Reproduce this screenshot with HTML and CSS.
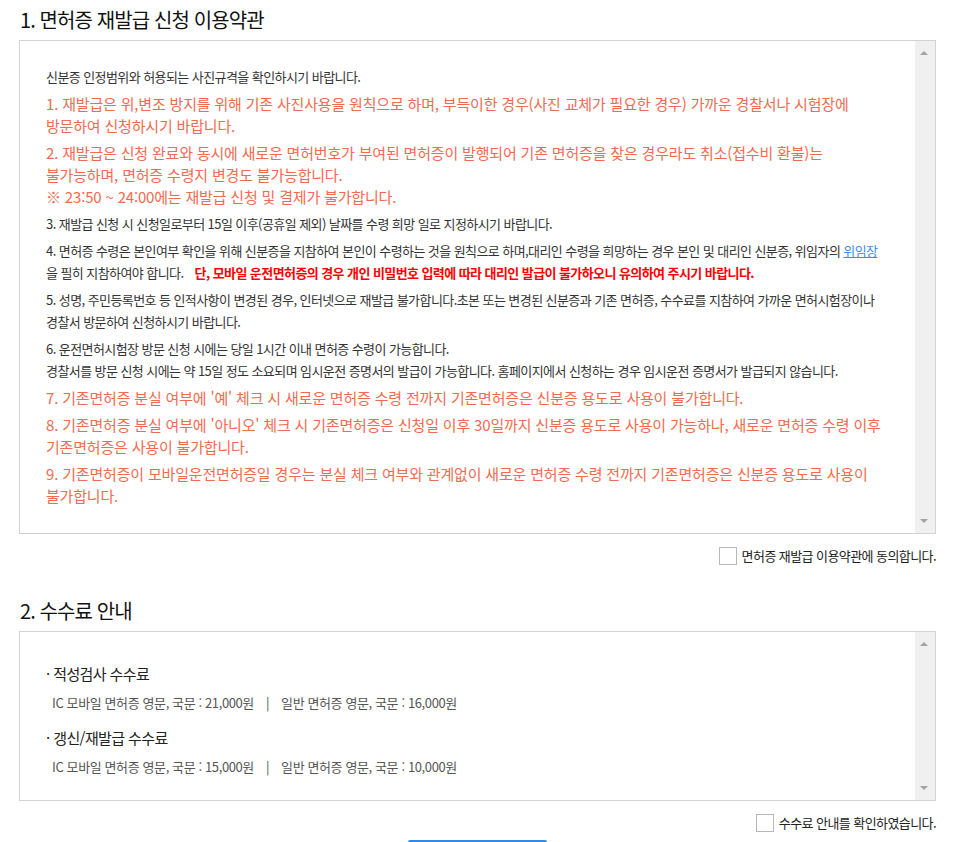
FILE: index.html
```html
<!DOCTYPE html>
<html lang="ko">
<head>
    <meta charset="UTF-8">
    <meta name="viewport" content="width=device-width, initial-scale=1.0">
    <title>면허증 재발급 신청</title>
    <link rel="stylesheet" href="styles.css">
</head>
<body>
    <div class="wrap">
        <h2 class="sec-title">1. 면허증 재발급 신청 이용약관</h2>
        <div class="scroll-box terms">
            <div class="scroll-body">
                <p class="txt">신분증 인정범위와 허용되는 사진규격을 확인하시기 바랍니다.</p>
                <p class="warn">1. 재발급은 위,변조 방지를 위해 기존 사진사용을 원칙으로 하며, 부득이한 경우(사진 교체가 필요한 경우) 가까운 경찰서나 시험장에<br>방문하여 신청하시기 바랍니다.</p>
                <p class="warn">2. 재발급은 신청 완료와 동시에 새로운 면허번호가 부여된 면허증이 발행되어 기존 면허증을 찾은 경우라도 취소(접수비 환불)는<br>불가능하며, 면허증 수령지 변경도 불가능합니다.<br>※ 23:50 ~ 24:00에는 재발급 신청 및 결제가 불가합니다.</p>
                <p class="txt">3. 재발급 신청 시 신청일로부터 15일 이후(공휴일 제외) 날짜를 수령 희망 일로 지정하시기 바랍니다.</p>
                <p class="txt">4. 면허증 수령은 본인여부 확인을 위해 신분증을 지참하여 본인이 수령하는 것을 원칙으로 하며,대리인 수령을 희망하는 경우 본인 및 대리인 신분증, 위임자의 <a href="#" class="link">위임장</a><br>을 필히 지참하여야 합니다. <strong class="alert">단, 모바일 운전면허증의 경우 개인 비밀번호 입력에 따라 대리인 발급이 불가하오니 유의하여 주시기 바랍니다.</strong></p>
                <p class="txt">5. 성명, 주민등록번호 등 인적사항이 변경된 경우, 인터넷으로 재발급 불가합니다.초본 또는 변경된 신분증과 기존 면허증, 수수료를 지참하여 가까운 면허시험장이나<br>경찰서 방문하여 신청하시기 바랍니다.</p>
                <p class="txt">6. 운전면허시험장 방문 신청 시에는 당일 1시간 이내 면허증 수령이 가능합니다.<br>경찰서를 방문 신청 시에는 약 15일 정도 소요되며 임시운전 증명서의 발급이 가능합니다. 홈페이지에서 신청하는 경우 임시운전 증명서가 발급되지 않습니다.</p>
                <p class="warn">7. 기존면허증 분실 여부에 '예' 체크 시 새로운 면허증 수령 전까지 기존면허증은 신분증 용도로 사용이 불가합니다.</p>
                <p class="warn">8. 기존면허증 분실 여부에 '아니오' 체크 시 기존면허증은 신청일 이후 30일까지 신분증 용도로 사용이 가능하나, 새로운 면허증 수령 이후<br>기존면허증은 사용이 불가합니다.</p>
                <p class="warn">9. 기존면허증이 모바일운전면허증일 경우는 분실 체크 여부와 관계없이 새로운 면허증 수령 전까지 기존면허증은 신분증 용도로 사용이<br>불가합니다.</p>
            </div>
            <div class="fake-bar"><span class="arrow up"></span><span class="arrow down"></span></div>
        </div>
        <label class="agree"><input type="checkbox" class="chk">면허증 재발급 이용약관에 동의합니다.</label>

        <h2 class="sec-title second">2. 수수료 안내</h2>
        <div class="scroll-box fees">
            <div class="scroll-body">
                <dl class="fee">
                    <dt>· 적성검사 수수료</dt>
                    <dd>IC 모바일 면허증 영문, 국문 : 21,000원<span class="bar">|</span>일반 면허증 영문, 국문 : 16,000원</dd>
                    <dt>· 갱신/재발급 수수료</dt>
                    <dd>IC 모바일 면허증 영문, 국문 : 15,000원<span class="bar">|</span>일반 면허증 영문, 국문 : 10,000원</dd>
                </dl>
            </div>
            <div class="fake-bar"><span class="arrow up"></span><span class="arrow down"></span></div>
        </div>
        <label class="agree"><input type="checkbox" class="chk">수수료 안내를 확인하였습니다.</label>

        <div class="btn-area">
            <button class="btn-next">다음</button>
        </div>
    </div>
</body>
</html>
```

FILE: styles.css
```css
* {
    box-sizing: border-box;
}
body {
    margin: 0;
    font-family: "Noto Sans CJK KR", "Noto Sans", sans-serif;
    color: #333;
    background: #fff;
    letter-spacing: -0.036em;
}
.wrap {
    padding: 6px 17px 40px 19px;
}
.sec-title {
    margin: 0 0 6px 1px;
    font-size: 20px;
    line-height: 28px;
    font-weight: 400;
    color: #111;
    letter-spacing: -0.045em;
}
.sec-title.second {
    margin-top: 32px;
}
.scroll-box {
    display: flex;
    border: 1px solid #d3d3d3;
    background: #fff;
}
.terms {
    height: 494px;
}
.fees {
    height: 170px;
}
.scroll-body {
    flex: 1;
    overflow: hidden;
    padding: 25px 0 0 26px;
}
.fees .scroll-body {
    padding-top: 31px;
}
.fake-bar {
    position: relative;
    width: 20px;
    background: #f0f0f0;
}
.arrow {
    position: absolute;
    left: 5px;
    width: 0;
    height: 0;
    border-left: 4.5px solid transparent;
    border-right: 4.5px solid transparent;
}
.arrow.up {
    top: 10px;
    border-bottom: 4px solid #a3a3a3;
}
.arrow.down {
    bottom: 10px;
    border-top: 4px solid #a3a3a3;
}
.scroll-body p {
    margin: 0 0 5px;
    line-height: 22px;
    white-space: nowrap;
}
.txt {
    font-size: 13px;
    color: #333;
}
.warn {
    font-size: 15px;
    color: #f36a50;
    letter-spacing: -0.012em;
}
.link {
    color: #3b8de6;
}
.alert {
    margin-left: 8px;
    color: #f00;
}
.agree {
    display: flex;
    justify-content: flex-end;
    align-items: center;
    margin-top: 13px;
    font-size: 13px;
    line-height: 18px;
    color: #222;
}
.chk {
    appearance: none;
    width: 18px;
    height: 18px;
    margin: 0 5px 0 0;
    border: 1px solid #b8b8b8;
    background: #fff;
}
.fee {
    margin: 0;
}
.fee dt {
    font-size: 15px;
    line-height: 22px;
    color: #222;
    letter-spacing: -0.04em;
}
.fee dd {
    margin: 7px 0 13px 6px;
    font-size: 13px;
    line-height: 22px;
    color: #555;
    letter-spacing: -0.03em;
}
.fee dd:last-child {
    margin-bottom: 0;
}
.bar {
    margin: 0 12px;
}
.btn-area {
    display: flex;
    justify-content: center;
    margin-top: 8px;
}
.btn-next {
    width: 139px;
    height: 44px;
    border: none;
    border-radius: 2px;
    background: #2f8be3;
    color: #fff;
    font-family: inherit;
    font-size: 16px;
}
```
